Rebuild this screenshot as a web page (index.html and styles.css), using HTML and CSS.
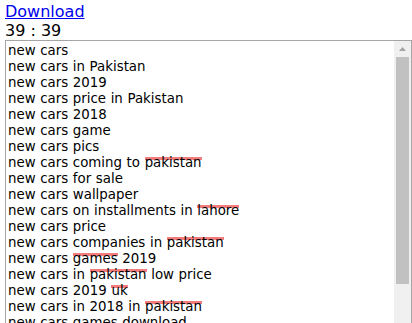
FILE: index.html
```html
<!DOCTYPE html>
<html>
<head>
<meta charset="utf-8">
<link rel="stylesheet" href="styles.css">
</head>
<body>
<div class="top"><a class="dl" href="#">Download</a></div>
<div class="count">39 : 39</div>
<div class="box">
  <div class="text">
    <div class="ln">new cars</div>
    <div class="ln">new cars in Pakistan</div>
    <div class="ln">new cars 2019</div>
    <div class="ln">new cars price in Pakistan</div>
    <div class="ln">new cars 2018</div>
    <div class="ln">new cars game</div>
    <div class="ln">new cars pics</div>
    <div class="ln">new cars coming to <span class="sp">pakistan</span></div>
    <div class="ln">new cars for sale</div>
    <div class="ln">new cars wallpaper</div>
    <div class="ln">new cars on installments in <span class="sp">lahore</span></div>
    <div class="ln">new cars price</div>
    <div class="ln">new cars companies in <span class="sp">pakistan</span></div>
    <div class="ln">new cars <span class="sp">games</span> 2019</div>
    <div class="ln">new cars in <span class="sp">pakistan</span> low price</div>
    <div class="ln">new cars 2019 <span class="sp">uk</span></div>
    <div class="ln">new cars in 2018 in <span class="sp">pakistan</span></div>
    <div class="ln">new cars games download</div>
  </div>
  <div class="sb">
    <div class="btn"><svg width="7" height="4" viewBox="0 0 7 4"><path d="M0 4 L3.5 0 L7 4 Z" fill="#a3a3a3"/></svg></div>
    <div class="track"><div class="thumb"></div></div>
  </div>
</div>
</body>
</html>
```
FILE: styles.css
```css
html, body {
  margin: 0;
  padding: 0;
  background: #fff;
  overflow: hidden;
}
body {
  padding: 2px 0 0 5px;
  font-family: "DejaVu Sans", Verdana, sans-serif;
  font-size: 16px;
  line-height: 19px;
  color: #000;
}
.dl {
  color: #0000ee;
  text-decoration: underline;
}
.box {
  width: 405px;
  height: 300px;
  border: 1px solid #a6a6a6;
  display: flex;
  overflow: hidden;
}
.text {
  flex: 1;
  padding: 2px 2px;
  font-size: 13.35px;
  line-height: 16px;
  word-spacing: 0.4px;
  overflow: hidden;
}
.ln {
  white-space: pre;
}
.sp {
  background-image: linear-gradient(#f37c7c, #f37c7c);
  background-repeat: no-repeat;
  background-size: 100% 3px;
  background-position: 0 2px;
}
.sb {
  width: 17px;
  background: #f0f0f0;
  display: flex;
  flex-direction: column;
}
.btn {
  height: 16px;
  display: flex;
  align-items: center;
  justify-content: center;
}
.track {
  flex: 1;
  padding: 0 2px;
}
.thumb {
  height: 227px;
  background: #c1c1c1;
}
```
